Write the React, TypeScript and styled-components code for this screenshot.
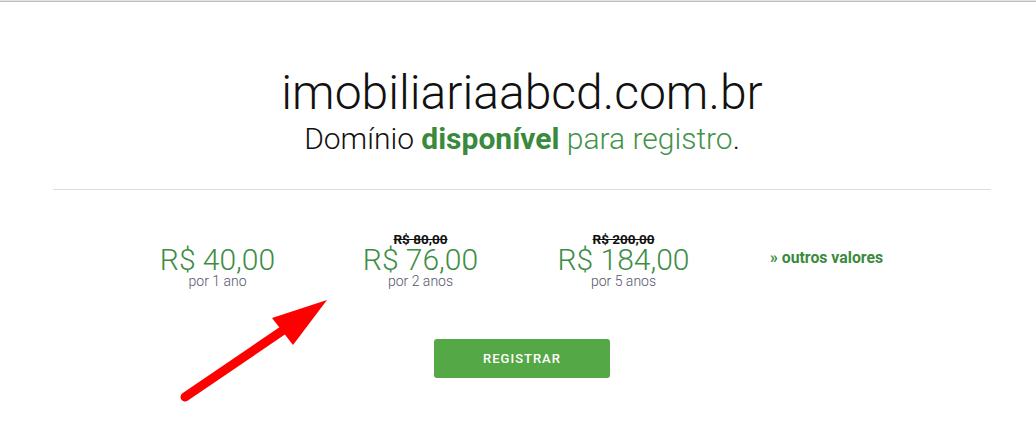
import styled, { createGlobalStyle } from 'styled-components';

const GlobalStyle = createGlobalStyle`
  html, body {
    margin: 0;
    padding: 0;
    background: #ffffff;
    font-family: Roboto, "Liberation Sans", sans-serif;
  }
`;

const TopEdge = styled.div`
  height: 1px;
  background: #e4e4e4;
  border-bottom: 1px solid #bdbdbd;
`;

const Page = styled.div`
  position: relative;
  width: 938px;
  margin-left: 53px;
  height: 440px;
`;

const Header = styled.div`
  display: flex;
  flex-direction: column;
  align-items: center;
  padding-top: 63px;
  padding-bottom: 32px;
  border-bottom: 1px solid #dddddd;
`;

const DomainName = styled.h1`
  margin: 0;
  font-size: 48px;
  font-weight: 300;
  line-height: 56px;
  color: #111111;
`;

const Status = styled.p`
  margin: 0;
  font-size: 30px;
  font-weight: 300;
  line-height: 36px;
  color: #111111;
`;

const Green = styled.span<{ $bold?: boolean }>`
  color: ${(p) => (p.$bold ? '#3a8a3e' : '#43924a')};
  font-weight: ${(p) => (p.$bold ? 700 : 300)};
`;

const Prices = styled.div`
  display: grid;
  grid-template-columns: repeat(4, 203px);
  justify-content: center;
  margin-top: 42px;
`;

const PriceCol = styled.div`
  display: flex;
  flex-direction: column;
  align-items: center;
  justify-content: flex-end;
  height: 56px;
`;

const OldPrice = styled.span`
  font-size: 13.5px;
  font-weight: 700;
  line-height: 12px;
  color: #111111;
  text-decoration: line-through;
`;

const Price = styled.span`
  font-size: 30px;
  font-weight: 300;
  line-height: 30px;
  color: #3e8d44;
`;

const Period = styled.span`
  font-size: 14px;
  font-weight: 300;
  line-height: 13px;
  color: #55556a;
`;

const MoreLink = styled.a`
  align-self: center;
  justify-self: center;
  font-size: 15.8px;
  font-weight: 700;
  color: #3a8a3e;
  text-decoration: none;
  margin-top: -6px;
`;

const Actions = styled.div`
  display: flex;
  justify-content: center;
  margin-top: 51px;
`;

const RegisterButton = styled.button`
  width: 176px;
  height: 39px;
  border: none;
  border-radius: 3px;
  background: #55a846;
  color: #ffffff;
  font-family: Roboto, "Liberation Sans", sans-serif;
  font-size: 13px;
  font-weight: 500;
  letter-spacing: 1px;
  cursor: pointer;
`;

const Annotation = styled.svg`
  position: absolute;
  left: -53px;
  top: 0;
  pointer-events: none;
`;

const plans = [
  { price: 'R$ 40,00', period: 'por 1 ano' },
  { old: 'R$ 80,00', price: 'R$ 76,00', period: 'por 2 anos' },
  { old: 'R$ 200,00', price: 'R$ 184,00', period: 'por 5 anos' },
];

function App() {
  return (
    <>
      <GlobalStyle />
      <TopEdge />
      <Page>
        <Header>
          <DomainName>imobiliariaabcd.com.br</DomainName>
          <Status>
            Domínio <Green $bold>disponível</Green> <Green>para registro</Green>.
          </Status>
        </Header>
        <Prices>
          {plans.map((plan) => (
            <PriceCol key={plan.period}>
              {plan.old && <OldPrice>{plan.old}</OldPrice>}
              <Price>{plan.price}</Price>
              <Period>{plan.period}</Period>
            </PriceCol>
          ))}
          <MoreLink href="#">» outros valores</MoreLink>
        </Prices>
        <Actions>
          <RegisterButton>REGISTRAR</RegisterButton>
        </Actions>
        <Annotation width="400" height="440" viewBox="0 -2 400 440">
          <line x1="185" y1="393" x2="282" y2="327" stroke="#ff0000" strokeWidth="9" strokeLinecap="round" />
          <polygon points="327,296 272,314 293,341" fill="#ff0000" />
        </Annotation>
      </Page>
    </>
  );
}

export default App;
